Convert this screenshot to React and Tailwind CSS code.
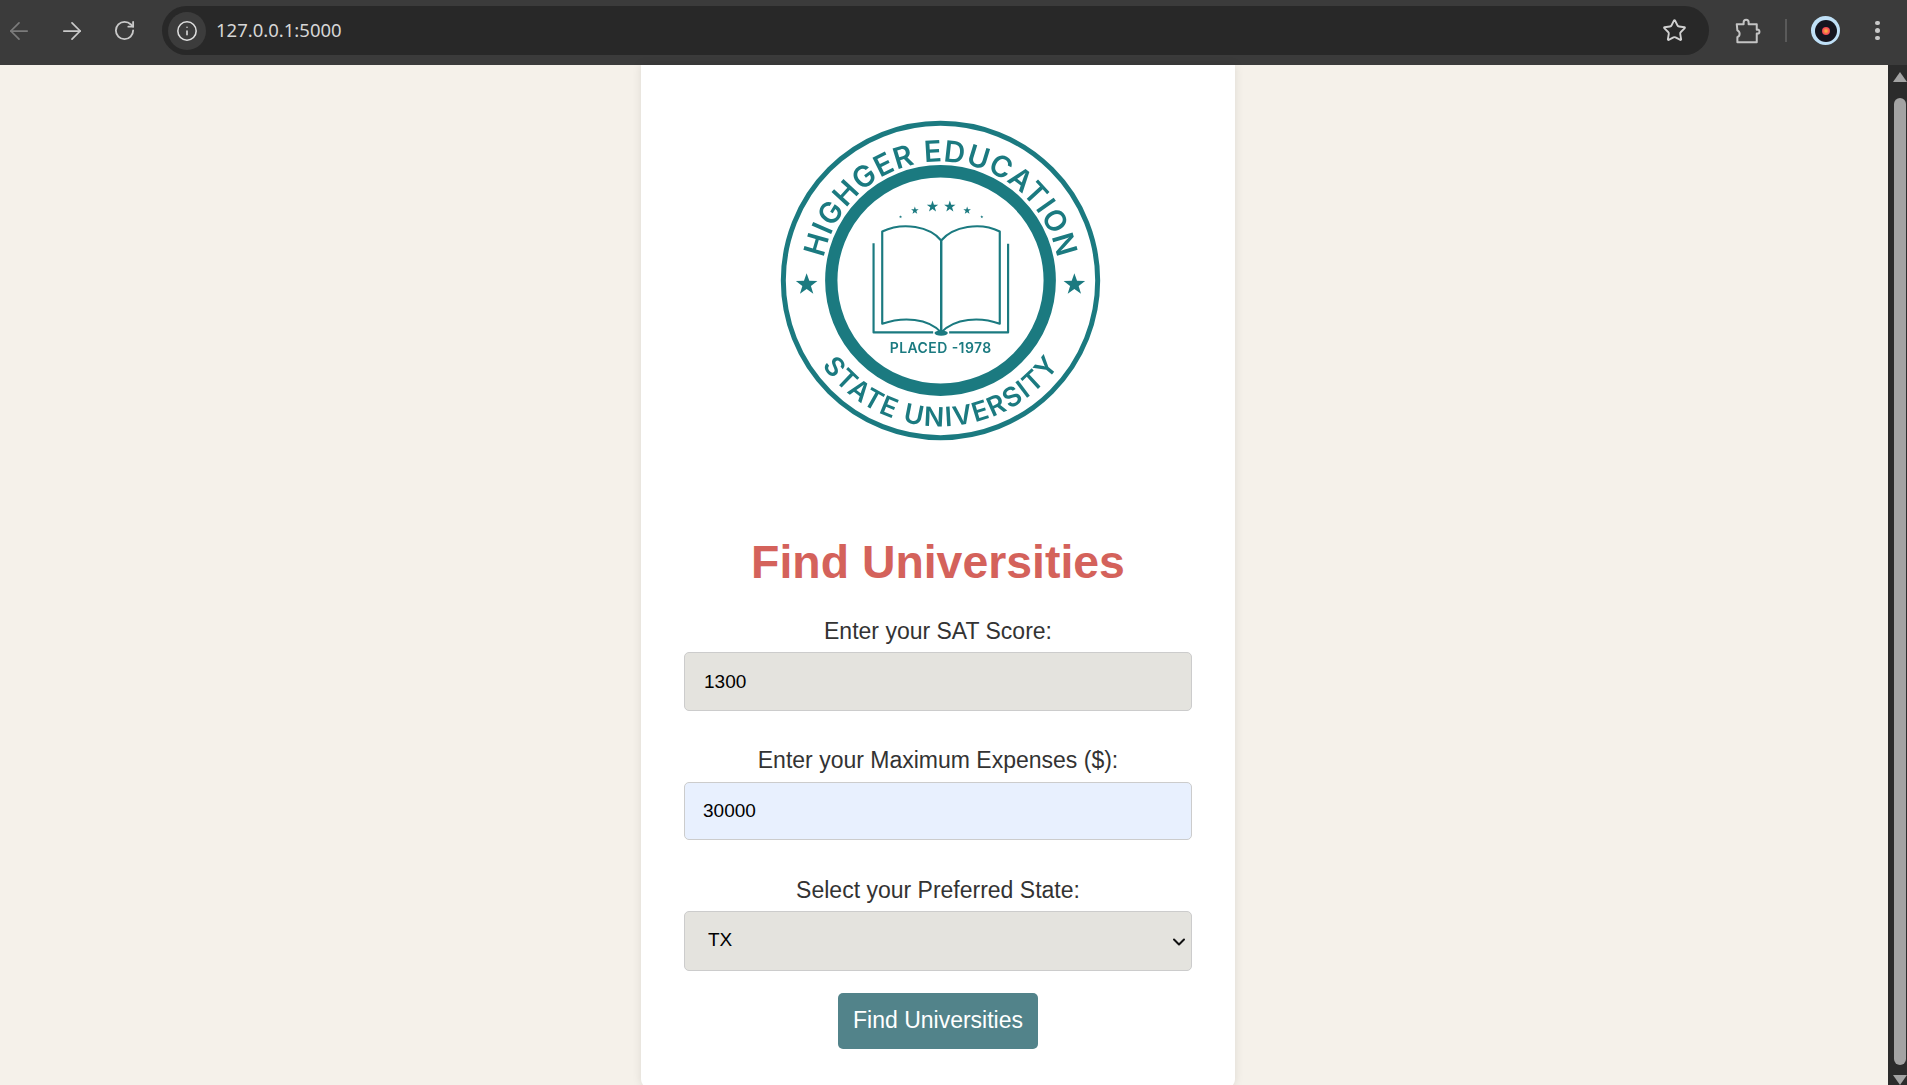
import React from "react";
import { ArrowLeft, ArrowRight, RotateCw, Info, Star, ChevronDown } from "lucide-react";

const TEAL = "#1b7a80";

function starPoints(cx, cy, r) {
  const pts = [];
  for (let i = 0; i < 10; i++) {
    const rad = i % 2 === 0 ? r : r * 0.4;
    const a = -Math.PI / 2 + (i * Math.PI) / 5;
    pts.push(`${(cx + rad * Math.cos(a)).toFixed(1)},${(cy + rad * Math.sin(a)).toFixed(1)}`);
  }
  return pts.join(" ");
}

function Logo() {
  const stars = [
    [110, 524, 34],
    [914, 524, 34],
    [488, 290, 18],
    [540, 290, 18],
    [435, 302, 12],
    [592, 302, 12],
    [392, 321, 5],
    [636, 321, 5],
  ];
  return (
    <svg viewBox="0 0 1024 1024" className="w-[341px] h-[341px] ml-[5px] self-center block shrink-0 blur-[0.4px]">
      <defs>
        <path id="arcTop" d="M 155 512 A 357 357 0 0 1 869 512" fill="none" />
        <path id="arcBottom" d="M 74 512 A 438 438 0 0 0 950 512" fill="none" />
      </defs>
      <circle cx="512" cy="512" r="472" fill="none" stroke={TEAL} strokeWidth="15" />
      <circle cx="512" cy="512" r="328" fill="none" stroke={TEAL} strokeWidth="37" />
      <text fontFamily="Inter, sans-serif" fontWeight="600" fontSize="88" fill={TEAL}>
        <textPath href="#arcTop" startOffset="50%" textAnchor="middle" textLength="985" lengthAdjust="spacing">
          HIGHGER EDUCATION
        </textPath>
      </text>
      <text fontFamily="Inter, sans-serif" fontWeight="600" fontSize="80" fill={TEAL}>
        <textPath href="#arcBottom" startOffset="50%" textAnchor="middle" textLength="830" lengthAdjust="spacing">
          STATE UNIVERSITY
        </textPath>
      </text>
      {stars.map(([x, y, r]) => (
        <polygon key={`${x}-${y}`} points={starPoints(x, y, r)} fill={TEAL} />
      ))}
      <g fill="none" stroke={TEAL} strokeWidth="6.5" strokeLinejoin="round">
        <path d="M514 392 C480 350 400 335 337 365 L337 642 C400 620 475 625 514 668 Z" />
        <path d="M514 392 C550 350 630 335 690 365 L690 642 C630 620 555 625 514 668 Z" />
        <path d="M311 400 L311 668 L490 668" />
        <path d="M715 402 L715 668 L538 668" />
      </g>
      <ellipse cx="514" cy="670" rx="20" ry="8" fill={TEAL} />
      <text
        x="512"
        y="729"
        textAnchor="middle"
        fontFamily="Inter, sans-serif"
        fontWeight="600"
        fontSize="42"
        textLength="305"
        lengthAdjust="spacing"
        fill={TEAL}
      >
        PLACED -1978
      </text>
    </svg>
  );
}

function Toolbar() {
  return (
    <header className="h-[65px] shrink-0 bg-[#3b3b3b] flex items-center pl-[8px] pb-[4px]">
      <div className="w-[22px] flex justify-center">
        <ArrowLeft size={28} strokeWidth={1.5} color="#7b7b7b" className="shrink-0" />
      </div>
      <div className="w-[22px] flex justify-center ml-[31px]">
        <ArrowRight size={28} strokeWidth={1.5} color="#c9c9c9" className="shrink-0" />
      </div>
      <div className="w-[22px] flex justify-center ml-[30px]">
        <RotateCw size={23} strokeWidth={1.9} color="#c9c9c9" className="shrink-0" />
      </div>
      <div className="ml-[27px] w-[1547px] h-[49px] rounded-[25px] bg-[#282828] flex items-center pl-[6px] pr-[22px]">
        <div className="w-[38px] h-[38px] rounded-full bg-[#3c3c3c] flex items-center justify-center">
          <Info size={22} strokeWidth={1.7} color="#dedede" />
        </div>
        <span className="ml-[10px] text-[18.5px] text-[#d6d6d6] font-['Noto_Sans',sans-serif] leading-none">
          127.0.0.1:5000
        </span>
        <div className="ml-auto">
          <Star size={25} strokeWidth={1.8} color="#d0d0d0" />
        </div>
      </div>
      <svg viewBox="0 0 24 24" className="w-[30px] h-[30px] ml-[24px]" fill="none" stroke="#c4c4c4" strokeWidth="1.6" strokeLinejoin="round">
        <path d="M3 6.5 H8.5 V5 a2 2 0 0 1 4 0 V6.5 H19 V11 H20.5 a2 2 0 0 1 0 3 H19 V21 H3.5 V17 a3 3 0 0 0 0-5.5 Z" />
      </svg>
      <div className="w-[2px] h-[23px] bg-[#5a5a5a] ml-[22px]" />
      <div className="ml-[24px] w-[29px] h-[29px] rounded-full bg-[#bfe0f7] flex items-center justify-center">
        <div className="w-[22px] h-[22px] rounded-full bg-[#15151f] flex items-center justify-center">
          <div className="w-[8px] h-[8px] rounded-full bg-[radial-gradient(circle,#f8c23c_0%,#f44a55_60%,#c8245e_100%)]" />
        </div>
      </div>
      <div className="ml-[35px] flex flex-col gap-[3.2px]">
        <span className="w-[4.5px] h-[4.5px] rounded-full bg-[#c8c8c8]" />
        <span className="w-[4.5px] h-[4.5px] rounded-full bg-[#c8c8c8]" />
        <span className="w-[4.5px] h-[4.5px] rounded-full bg-[#c8c8c8]" />
      </div>
    </header>
  );
}

function Scrollbar() {
  return (
    <div className="w-[19px] shrink-0 bg-[#2b2b2b] flex flex-col items-center pl-[4px]">
      <div className="mt-[7px] w-0 h-0 border-l-[7px] border-r-[7px] border-b-[10px] border-l-transparent border-r-transparent border-b-[#a3a3a3]" />
      <div className="mt-[16px] w-[12px] flex-1 rounded-[6px] bg-[#a3a3a3]" />
      <div className="mt-[10px] w-0 h-0 border-l-[7px] border-r-[7px] border-t-[10px] border-l-transparent border-r-transparent border-t-[#a3a3a3]" />
    </div>
  );
}

const labelCls = "block text-center text-[23px] leading-[26px] text-[#333333]";
const fieldCls =
  "block w-full border border-[#cccccc] rounded-[5px] text-[19px] text-black outline-none";

export default function App() {
  return (
    <div className="h-screen w-full overflow-hidden flex flex-col bg-[#f5f1ea] font-['Liberation_Sans',Arial,sans-serif]">
      <Toolbar />
      <div className="flex-1 flex min-h-0">
        <main className="flex-1 flex justify-center min-w-0 pr-[12px]">
          <div className="w-[594px] h-[1024px] bg-white rounded-b-[10px] shadow-[0_0_10px_rgba(0,0,0,0.1)] px-[43px] pt-[45px] flex flex-col">
            <Logo />
            <h1 className="mt-[83px] text-center text-[46.4px] leading-[56px] font-bold text-[#d4625b]">
              Find Universities
            </h1>
            <label className={`${labelCls} mt-[28px] mb-[8px]`}>Enter your SAT Score:</label>
            <input
              type="text"
              defaultValue="1300"
              className={`${fieldCls} h-[59px] pl-[19px] bg-[#e4e3de]`}
            />
            <label className={`${labelCls} mt-[36px] mb-[9px]`}>Enter your Maximum Expenses ($):</label>
            <input
              type="text"
              defaultValue="30000"
              className={`${fieldCls} h-[58px] pl-[18px] bg-[#e8f0fe]`}
            />
            <label className={`${labelCls} mt-[37px] mb-[8px]`}>Select your Preferred State:</label>
            <div className="relative">
              <select
                defaultValue="TX"
                className={`${fieldCls} h-[60px] pl-[23px] pb-[2px] appearance-none bg-[#e4e3de]`}
              >
                <option value="TX">TX</option>
              </select>
              <ChevronDown
                size={20}
                strokeWidth={2.4}
                color="#111111"
                className="absolute right-[3px] top-[21px] pointer-events-none"
              />
            </div>
            <button
              type="button"
              className="mt-[22px] self-center w-[200px] h-[56px] pb-[2px] rounded-[5px] bg-[#52838a] text-white text-[23px]"
            >
              Find Universities
            </button>
          </div>
        </main>
        <Scrollbar />
      </div>
    </div>
  );
}
